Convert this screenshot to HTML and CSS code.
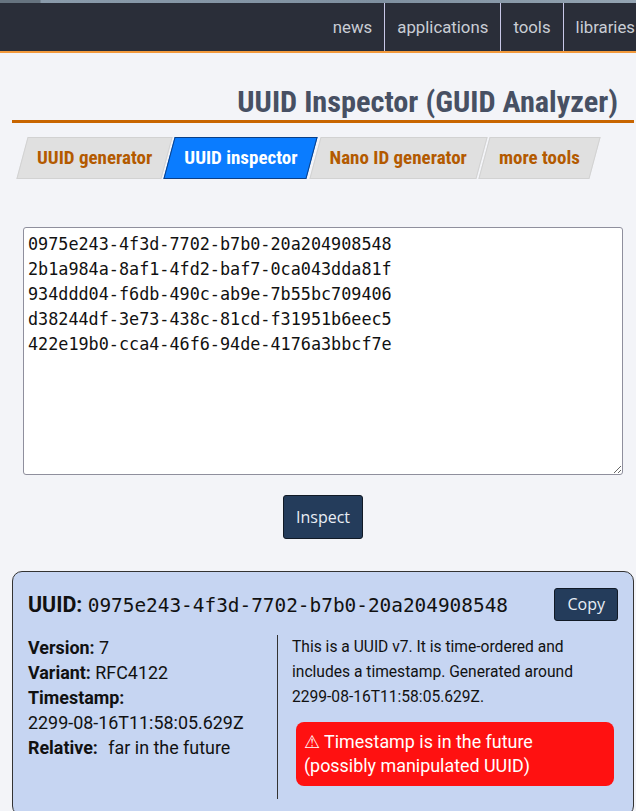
FILE: index.html
```html
<!DOCTYPE html>
<html lang="en">

<head>
  <meta charset="UTF-8">
  <meta name="viewport" content="width=device-width, initial-scale=1.0">
  <title>UUID Inspector (GUID Analyzer)</title>
  <link rel="stylesheet" href="styles.css">
</head>

<body>
  <div class="top-strip"></div>
  <header class="site-header">
    <nav class="nav">
      <a href="#">news</a>
      <a href="#">applications</a>
      <a href="#">tools</a>
      <a href="#">libraries</a>
    </nav>
  </header>

  <main class="page">
    <h1 class="title">UUID Inspector (GUID Analyzer)</h1>

    <ul class="tabs">
      <li><a class="tab" href="#">UUID generator</a></li>
      <li><a class="tab active" href="#">UUID inspector</a></li>
      <li><a class="tab" href="#">Nano ID generator</a></li>
      <li><a class="tab" href="#">more tools</a></li>
    </ul>

    <form class="inspect-form">
      <textarea id="uuids" spellcheck="false">0975e243-4f3d-7702-b7b0-20a204908548
2b1a984a-8af1-4fd2-baf7-0ca043dda81f
934ddd04-f6db-490c-ab9e-7b55bc709406
d38244df-3e73-438c-81cd-f31951b6eec5
422e19b0-cca4-46f6-94de-4176a3bbcf7e</textarea>
      <button type="submit" class="btn inspect-btn">Inspect</button>
    </form>

    <section class="result-card">
      <div class="result-head">
        <h2><span class="label">UUID:</span> <code>0975e243-4f3d-7702-b7b0-20a204908548</code></h2>
        <button type="button" class="btn copy-btn">Copy</button>
      </div>
      <div class="result-body">
        <div class="facts">
          <div><b>Version:</b> 7</div>
          <div><b>Variant:</b> RFC4122</div>
          <div><b>Timestamp:</b> <span class="nowrap">2299-08-16T11:58:05.629Z</span></div>
          <div><b>Relative:</b> <span class="relative">far in the future</span></div>
        </div>
        <div class="summary">
          <p>This is a UUID v7. It is time-ordered and includes a timestamp. Generated around <span class="nowrap">2299-08-16T11:58:05.629Z.</span></p>
          <div class="alert">⚠ Timestamp is in the future (possibly manipulated UUID)</div>
        </div>
      </div>
    </section>
  </main>
</body>

</html>
```

FILE: styles.css
```css
:root {
  --navy: #243c5b;
  --orange: #c86500;
  --tab-text: #b35a00;
  --page-bg: #f3f4f8;
}

body {
  margin: 0;
  background: var(--page-bg);
  font-family: Roboto, "Liberation Sans", sans-serif;
  color: #111;
  overflow-x: hidden;
}

.top-strip {
  height: 3px;
  background: linear-gradient(90deg, #66737f 0, #66737f 40px, #8a9bab 41px, #7f90a0 60%, #94a4b2 100%);
}

.site-header {
  background: #2a2e39;
  border-bottom: 2px solid #f39a3c;
  overflow: hidden;
}

.nav {
  display: flex;
  justify-content: flex-end;
  height: 48px;
  margin-right: -11px;
}

.nav a {
  display: flex;
  align-items: center;
  padding: 0 12px;
  color: #c9cdd5;
  text-decoration: none;
  font-size: 16.8px;
  border-left: 1px solid #c8c8e8;
}

.nav a:first-child { border-left: none; }

.page {
  margin: 0 2px 0 12px;
}

.nowrap { white-space: nowrap; }

.title {
  margin: 31px 0 0;
  padding-right: 16px;
  text-align: right;
  font-family: "Roboto Condensed", "Liberation Sans Narrow", "DejaVu Sans Condensed", sans-serif;
  font-size: 30.3px;
  line-height: 36px;
  font-weight: 700;
  color: #475063;
  border-bottom: 3px solid var(--orange);
}

.tabs {
  list-style: none;
  display: flex;
  gap: 2px;
  margin: 14px 0 0;
  padding: 0 0 0 10px;
}

.tab {
  position: relative;
  z-index: 0;
  display: block;
  padding: 0 15px;
  line-height: 42px;
  font-family: "Roboto Condensed", "Liberation Sans Narrow", "DejaVu Sans Condensed", sans-serif;
  font-size: 19px;
  font-weight: 700;
  color: var(--tab-text);
  text-decoration: none;
}

.tab::before {
  content: "";
  position: absolute;
  inset: 0;
  z-index: -1;
  background: #e0e0e0;
  border: 1px solid #d2d2d2;
  transform: skewX(-15deg);
}

.tab.active { color: #fff; }
.tab.active::before {
  background: #0a7cff;
  border-color: #0b3f86;
}

.inspect-form {
  display: flex;
  flex-direction: column;
  align-items: center;
  margin-top: 48px;
  padding: 0 11px;
}

.inspect-form textarea {
  align-self: stretch;
  box-sizing: border-box;
  height: 248px;
  margin: 0;
  padding: 3.5px 4px 2px;
  border: 1px solid #8f8f9d;
  border-radius: 3px;
  background: #fff;
  font-family: "DejaVu Sans Mono", monospace;
  font-size: 16.8px;
  line-height: 25px;
  color: #111;
}

.btn {
  background: var(--navy);
  color: #e9eef5;
  border: 1px solid #111a26;
  border-radius: 3px;
  font-family: "Open Sans", sans-serif;
  font-size: 16px;
  cursor: pointer;
}

.inspect-btn {
  margin-top: 20px;
  padding: 10px 12px;
  line-height: 22px;
}

.result-card {
  margin-top: 32px;
  padding: 16px 15px;
  background: #c6d5f2;
  border: 1px solid #333;
  border-radius: 10px;
}

.result-head {
  display: flex;
  align-items: center;
  justify-content: space-between;
}

.result-head h2 {
  margin: 0;
  font-size: 21.4px;
  font-weight: 700;
}

.result-head code {
  font-family: "DejaVu Sans Mono", monospace;
  font-size: 19.4px;
  font-weight: 400;
}

.copy-btn {
  padding: 5px 12px;
  line-height: 21px;
}

.result-body {
  display: grid;
  grid-template-columns: 250px 1fr;
  margin-top: 14px;
}

.facts {
  font-size: 17.9px;
  line-height: 25px;
  border-right: 1px solid #333;
}

.relative { margin-left: 6px; }

.summary {
  padding: 0 0 13px 14px;
  font-size: 15.6px;
  line-height: 25px;
}

.summary p { margin: 0; }

.alert {
  margin: 12px 4px 0;
  padding: 8px;
  background: #ff1111;
  color: #fff;
  border-radius: 8px;
  font-size: 17.9px;
  line-height: 24px;
}
```
